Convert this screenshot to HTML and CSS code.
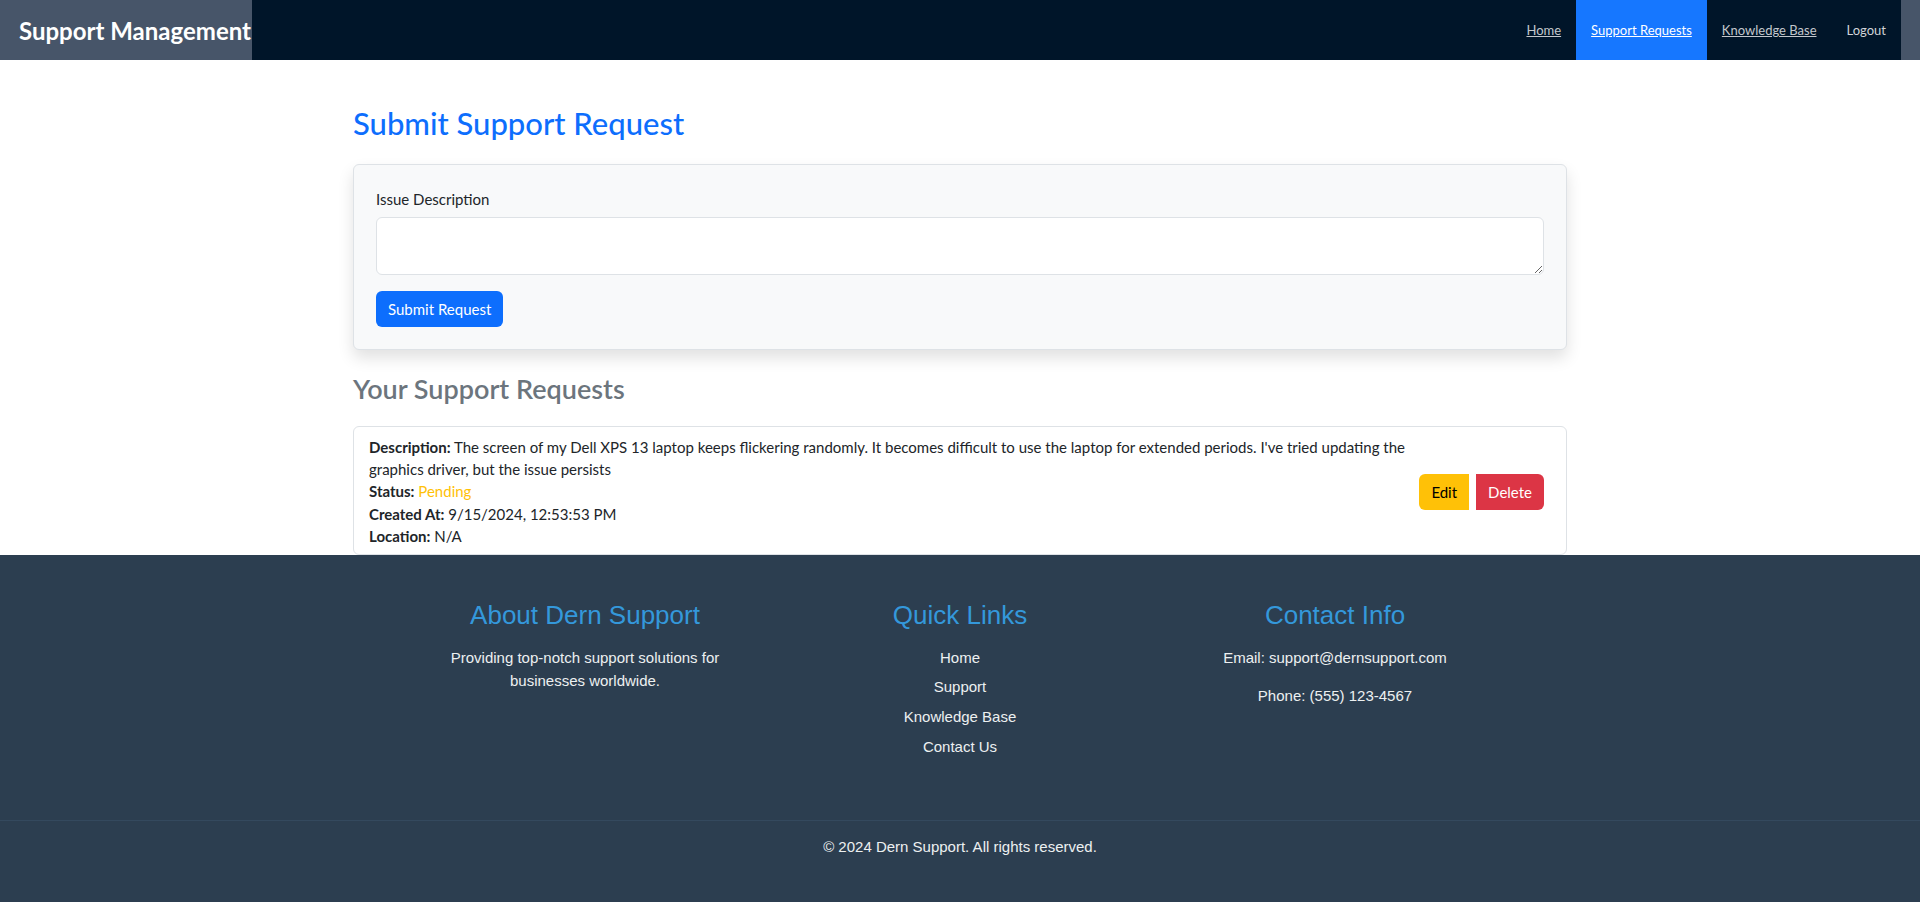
FILE: index.html
```html
<!DOCTYPE html>
<html lang="en">
<head>
<meta charset="utf-8">
<title>Support Management</title>
<link rel="stylesheet" href="styles.css">
</head>
<body>
<header class="topbar">
  <div class="brand">Support Management</div>
  <nav class="nav">
    <a class="nav-link" href="#">Home</a>
    <a class="nav-link active" href="#">Support Requests</a>
    <a class="nav-link" href="#">Knowledge Base</a>
    <button class="nav-logout" type="button">Logout</button>
  </nav>
</header>

<main class="container">
  <h1 class="page-title">Submit Support Request</h1>
  <form class="form-card">
    <label class="form-label" for="issue">Issue Description</label>
    <textarea id="issue" class="form-control"></textarea>
    <button class="btn btn-primary" type="button">Submit Request</button>
  </form>

  <h2 class="section-title">Your Support Requests</h2>
  <div class="request-card">
    <div class="request-info">
      <div class="request-line"><strong>Description:</strong> The screen of my Dell XPS 13 laptop keeps flickering randomly. It becomes difficult to use the laptop for extended periods. I've tried updating the graphics driver, but the issue persists</div>
      <div class="request-line"><strong>Status:</strong> <span class="status-pending">Pending</span></div>
      <div class="request-line"><strong>Created At:</strong> 9/15/2024, 12:53:53 PM</div>
      <div class="request-line"><strong>Location:</strong> N/A</div>
    </div>
    <div class="request-actions">
      <button class="btn btn-edit" type="button">Edit</button>
      <button class="btn btn-delete" type="button">Delete</button>
    </div>
  </div>
</main>

<footer class="footer">
  <div class="footer-cols">
    <section class="footer-col">
      <h3 class="footer-title">About Dern Support</h3>
      <p class="footer-text">Providing top-notch support solutions for businesses worldwide.</p>
    </section>
    <section class="footer-col">
      <h3 class="footer-title">Quick Links</h3>
      <ul class="footer-links">
        <li><a href="#">Home</a></li>
        <li><a href="#">Support</a></li>
        <li><a href="#">Knowledge Base</a></li>
        <li><a href="#">Contact Us</a></li>
      </ul>
    </section>
    <section class="footer-col">
      <h3 class="footer-title">Contact Info</h3>
      <p class="footer-contact">Email: support@dernsupport.com</p>
      <p class="footer-contact">Phone: (555) 123-4567</p>
    </section>
  </div>
  <div class="footer-bottom">
    <p class="copyright">&copy; 2024 Dern Support. All rights reserved.</p>
  </div>
</footer>
</body>
</html>
```

FILE: styles.css
```css
* { box-sizing: border-box; }

body {
  margin: 0;
  font-family: Lato, "Open Sans", sans-serif;
  color: #212529;
  background: #ffffff;
}

/* top bar */
.topbar {
  display: flex;
  height: 60px;
  background: #475569;
  padding-right: 19px;
}
.brand {
  flex: none;
  width: 252px;
  padding-left: 19px;
  display: flex;
  align-items: center;
  color: #ffffff;
  font-size: 24px;
  font-weight: 700;
  white-space: nowrap;
}
.nav {
  flex: 1;
  display: flex;
  justify-content: flex-end;
  background: #001529;
}
.nav-link,
.nav-logout {
  display: flex;
  align-items: center;
  padding: 0 15px;
  font-family: inherit;
  font-size: 13px;
  color: #c3c7cc;
  text-decoration: underline;
}
.nav-link.active {
  background: #1677ff;
  color: #ffffff;
}
.nav-logout {
  border: 0;
  background: transparent;
  text-decoration: none;
  color: #d0d3d7;
  cursor: pointer;
}

/* main */
.container {
  width: 1214px;
  margin: 0 auto;
}
.page-title {
  margin: 45px 0 22px;
  font-size: 31px;
  font-weight: 500;
  line-height: 1.2;
  color: #0d6efd;
}
.form-card {
  display: flex;
  flex-direction: column;
  align-items: flex-start;
  padding: 22px;
  background: #f8f9fa;
  border: 1px solid #dee2e6;
  border-radius: 6px;
  box-shadow: 0 8px 16px rgba(0, 0, 0, 0.12);
}
.form-label {
  font-size: 15px;
  line-height: 24px;
  margin-bottom: 6px;
}
.form-control {
  width: 100%;
  height: 58px;
  border: 1px solid #dee2e6;
  border-radius: 6px;
  background: #ffffff;
  padding: 6px 12px;
  font-family: inherit;
  font-size: 15px;
  resize: vertical;
  margin: 0 0 16px;
}
.btn {
  border: 0;
  font-family: inherit;
  font-size: 15px;
  line-height: 24px;
  padding: 6px 12px;
  cursor: pointer;
}
.btn-primary {
  background: #0d6efd;
  color: #ffffff;
  border-radius: 6px;
}
.section-title {
  margin: 23px 0 20px;
  font-size: 27px;
  font-weight: 600;
  line-height: 1.2;
  color: #6c757d;
}
.request-card {
  display: flex;
  align-items: center;
  gap: 4px;
  padding: 9px 22px 6px 15px;
  border: 1px solid #dee2e6;
  border-radius: 6px;
  background: #ffffff;
}
.request-info {
  flex: 1;
  font-size: 15px;
  line-height: 22.4px;
}
.status-pending { color: #ffc107; }
.request-actions {
  display: flex;
  gap: 7px;
  flex: none;
}
.btn-edit {
  background: #ffc107;
  color: #000000;
  border-radius: 6px 0 0 6px;
}
.btn-delete {
  background: #dc3545;
  color: #ffffff;
  border-radius: 0 6px 6px 0;
}

/* footer */
.footer {
  background: #2c3e50;
  font-family: "Liberation Sans", Arial, sans-serif;
  color: #ecf0f1;
  font-size: 15px;
  line-height: 23.25px;
}
.footer-cols {
  display: grid;
  grid-template-columns: repeat(3, 300px);
  column-gap: 75px;
  justify-content: center;
  padding: 45px 0 62px;
  text-align: center;
}
.footer-title {
  margin: 0 0 16px;
  font-size: 26px;
  font-weight: 400;
  line-height: 30px;
  color: #3498db;
}
.footer-text { margin: 0; }
.footer-links {
  list-style: none;
  margin: 0;
  padding: 0;
}
.footer-links li { margin-bottom: 6.5px; }
.footer-links li:last-child { margin-bottom: 0; }
.footer-links a {
  color: #ecf0f1;
  text-decoration: none;
}
.footer-contact { margin: 0 0 14.7px; }
.footer-bottom {
  border-top: 1px solid #34495e;
  padding: 14px 0 45px;
  text-align: center;
}
.copyright { margin: 0; }
```
